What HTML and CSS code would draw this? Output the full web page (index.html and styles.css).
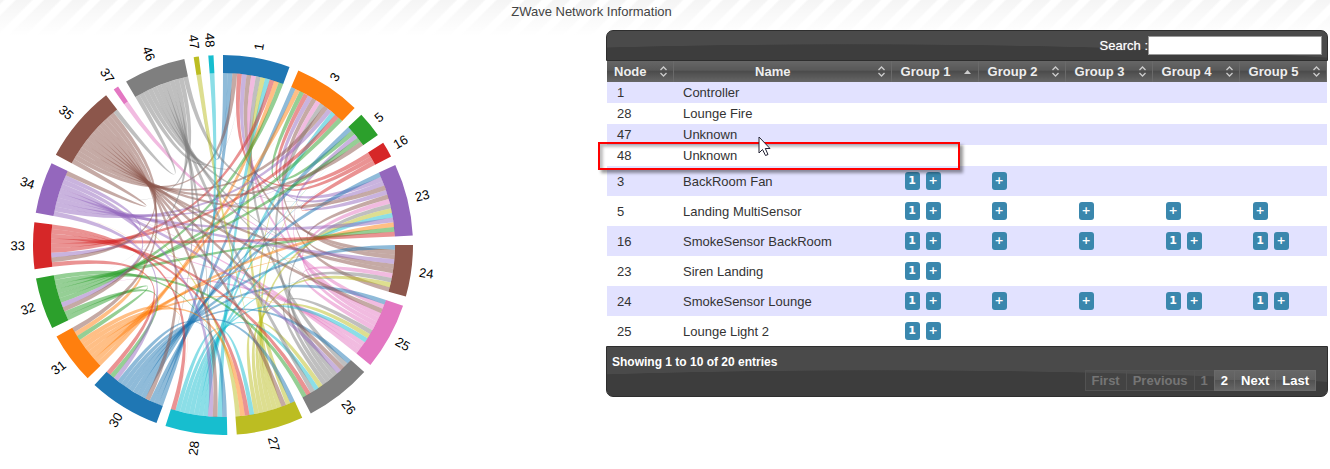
FILE: index.html
```
<!DOCTYPE html>
<html lang="en">
<head>
    <meta charset="UTF-8">
    <meta name="viewport" content="width=device-width, initial-scale=1.0">
    <title>ZWave Network Information</title>
    <link rel="stylesheet" href="styles.css">
</head>
<body>
    <header class="title-bar">ZWave Network Information</header>

    <main class="content">
        <div class="chart">
            <svg class="chord" viewBox="-223 -223 446 446" role="img" aria-label="Node associations"></svg>
        </div>

        <section class="nodes">
            <div class="toolbar">
                <label for="search">Search :</label>
                <input type="text" id="search">
            </div>

            <table class="node-table">
                <thead>
                    <tr>
                        <th class="col-node">Node</th>
                        <th>Name</th>
                        <th class="col-group sorted">Group 1</th>
                        <th class="col-group">Group 2</th>
                        <th class="col-group">Group 3</th>
                        <th class="col-group">Group 4</th>
                        <th class="col-group">Group 5</th>
                    </tr>
                </thead>
                <tbody class="tbody"></tbody>
            </table>

            <div class="footer">
                <p class="info">Showing 1 to 10 of 20 entries</p>
                <div class="pages">
                    <button disabled>First</button>
                    <button disabled>Previous</button>
                    <button disabled>1</button>
                    <button>2</button>
                    <button>Next</button>
                    <button>Last</button>
                </div>
            </div>

            <div class="highlight"></div>
            <svg class="cursor" viewBox="0 0 13 21">
                <path d="M1 1 V17 L4.5 13.5 L7.5 19.5 L10 18.5 L7.3 12.5 H12 Z" fill="#fff" stroke="#223" stroke-width="1"/>
            </svg>
        </section>
    </main>

    <script src="script.js"></script>
</body>
</html>
```
FILE: styles.css
```
* {
    box-sizing: border-box;
    padding: 0;
    margin: 0;
}

body {
    font-family: "Liberation Sans", Arial, Helvetica, sans-serif;
    font-size: 13px;
    color: #333;
    background-color: white;
    background-image:
        linear-gradient(rgba(255, 255, 255, 0), white),
        repeating-linear-gradient(135deg, #f5f5f5 0, #f5f5f5 2px, white 4px, white 10px, #f5f5f5 12px, #f5f5f5 20px);
    background-size: 100% 36px;
    background-repeat: no-repeat;
}

.title-bar {
    height: 22px;
    line-height: 24px;
    padding-right: 147px;
    text-align: center;
    color: #444;
}

.content {
    display: flex;
    align-items: flex-start;
}

/* chord diagram */
.chart {
    flex: 0 0 606px;
}

.chord {
    display: block;
    width: 446px;
    height: 446px;
    overflow: visible;
}

.chord text {
    font-size: 13px;
    fill: black;
}

.ribbon {
    fill-opacity: 0.5;
}

/* node table */
.nodes {
    position: relative;
    flex: 1;
    margin: 8px 2px 0 0;
}

.toolbar, .footer {
    display: flex;
    border: 1px solid #2e2e2e;
    color: white;
}

.toolbar {
    justify-content: flex-end;
    align-items: center;
    height: 31px;
    padding-right: 5px;
    border-radius: 7px 7px 0 0;
    background: radial-gradient(ellipse 760px 60px at 34% 73px, #3d3d3d 99%, #4a4a4a 100%);
    text-shadow: 0 0 1px rgba(255, 255, 255, 0.6);
}

.toolbar input {
    width: 174px;
    height: 19px;
    border: 1px solid #999;
    background-color: white;
    outline: none;
}

.node-table {
    width: calc(100% - 2px);
    margin: 0 1px;
    table-layout: fixed;
    border-collapse: collapse;
}

th {
    height: 21px;
    padding-right: 19px;
    color: #eee;
    background: url("data:image/svg+xml,%3Csvg xmlns='http://www.w3.org/2000/svg' width='9' height='11'%3E%3Cpath d='M1.5 4 L4.5 1 L7.5 4 M1.5 7 L4.5 10 L7.5 7' fill='none' stroke='%23ccc' stroke-width='1.3'/%3E%3C/svg%3E") no-repeat right 5px center,
        linear-gradient(#666 0, #585858 45%, #4a4a4a 46%, #666 100%);
    border-right: 1px solid #6a6a6a;
}

th.sorted {
    background: url("data:image/svg+xml,%3Csvg xmlns='http://www.w3.org/2000/svg' width='9' height='11'%3E%3Cpath d='M1 8 L4.5 4 L8 8 Z' fill='%23ccc'/%3E%3C/svg%3E") no-repeat right 6px center,
        linear-gradient(#666 0, #585858 45%, #4a4a4a 46%, #666 100%);
}

.col-node {
    width: 66px;
}

.col-group {
    width: 87px;
}

td {
    height: 21px;
    padding-left: 10px;
}

.tall td {
    height: 30px;
}

.tbody tr:nth-child(odd) {
    background-color: #e2e2ff;
}

.badge {
    display: inline-block;
    vertical-align: middle;
    width: 15px;
    height: 18px;
    margin: 0 3px;
    border: none;
    border-radius: 3px;
    background-color: #3a87ad;
    color: white;
    font-family: "DejaVu Sans", Verdana, sans-serif;
    font-size: 11px;
    font-weight: bold;
    line-height: 18px;
    text-align: center;
}

.footer {
    justify-content: space-between;
    align-items: flex-end;
    height: 51px;
    padding: 0 11px 5px 5px;
    border-radius: 0 0 7px 7px;
    background: radial-gradient(ellipse 760px 60px at 38% 83px, #3d3d3d 99%, #4a4a4a 100%);
}

.info {
    align-self: flex-start;
    padding-top: 8px;
    font-weight: bold;
    font-size: 12px;
}

.pages {
    display: flex;
}

.pages button {
    height: 21px;
    margin-left: -1px;
    padding: 0 6px;
    border: 1px solid #6a6a6a;
    background: linear-gradient(#666 0, #606060 45%, #505050 46%, #666 100%);
    color: white;
    font-family: inherit;
    font-size: 13px;
    font-weight: bold;
}

.pages button:disabled {
    border-color: #525252;
    background: rgba(255, 255, 255, 0.03);
    color: #757575;
}

button {
    cursor: pointer;
}

/* marker over row 48 */
.highlight {
    position: absolute;
    top: 112px;
    left: -8px;
    width: 362px;
    height: 28px;
    border: 2px solid red;
    box-shadow: 3px 3px 3px rgba(0, 0, 0, 0.4), inset 3px 3px 3px rgba(0, 0, 0, 0.25);
}

.cursor {
    position: absolute;
    top: 106px;
    left: 152px;
    width: 13px;
    height: 21px;
}
```
FILE: script.js
```
// table rows: node, name, then the number of associations in each group
const rows = [
    [1, 'Controller'],
    [28, 'Lounge Fire'],
    [47, 'Unknown'],
    [48, 'Unknown'],
    [3, 'BackRoom Fan', 1, 0],
    [5, 'Landing MultiSensor', 1, 0, 0, 0, 0],
    [16, 'SmokeSensor BackRoom', 1, 0, 0, 1, 1],
    [23, 'Siren Landing', 1],
    [24, 'SmokeSensor Lounge', 1, 0, 0, 1, 1],
    [25, 'Lounge Light 2', 1]
];

const tbody = document.querySelector('.tbody');

function addBadge(cell, text) {
    const badge = document.createElement('button');
    badge.className = 'badge';
    badge.innerText = text;
    cell.appendChild(badge);
}

rows.forEach(function(row) {
    const tr = document.createElement('tr');
    if (row.length > 2) {
        tr.className = 'tall';
    }
    for (let i = 0; i < 7; i++) {
        const td = document.createElement('td');
        if (i < 2) {
            td.innerText = row[i];
        } else if (row[i] !== undefined) {
            if (row[i] > 0) {
                addBadge(td, row[i]);
            }
            addBadge(td, '+');
        }
        tr.appendChild(td);
    }
    tbody.appendChild(tr);
});

// neighbours of each node, in the order they leave the arc
const links = [
    [1, [47, 30, 35, 16, 23, 24, 25, 26, 27, 28, 33, 31, 32]],
    [3, [30, 31, 5, 16, 23, 24, 25, 26, 35, 34, 28, 33, 32]],
    [5, [30, 3, 23, 32, 35]],
    [16, [1, 3, 23]],
    [23, [30, 1, 3, 35, 5, 24, 25, 26, 27, 28, 34, 31, 32, 33]],
    [24, [30, 1, 3, 34, 23, 35, 25, 26, 27, 5]],
    [25, [30, 1, 35, 3, 5, 23, 24, 26, 27, 28, 32, 33, 34]],
    [26, [30, 1, 35, 34, 3, 23, 24, 25, 27, 28, 46, 33, 32]],
    [27, [30, 1, 35, 3, 5, 23, 24, 25, 26, 28, 33, 31, 34]],
    [28, [30, 1, 35, 34, 3, 5, 23, 24, 25, 26, 27, 33]],
    [30, [1, 3, 5, 35, 16, 23, 24, 25, 26, 27, 28, 34, 32, 33]],
    [31, [1, 3, 23, 24, 25, 27, 28, 32, 34, 35]],
    [32, [31, 30, 35, 34, 1, 3, 5, 23, 26, 28]],
    [33, [30, 35, 34, 1, 3, 23, 26, 27, 28]],
    [34, [30, 3, 5, 23, 24, 26, 28, 32, 33, 35]],
    [35, [34, 1, 3, 5, 23, 24, 25, 26, 27, 28, 30, 31, 32, 33, 46]],
    [37, [24]],
    [46, [35, 1, 3, 23, 24, 25, 26, 28, 30, 32, 34, 16]],
    [47, [27]],
    [48, [28]]
];
const colors = ['#1f77b4', '#ff7f0e', '#2ca02c', '#d62728', '#9467bd', '#8c564b', '#e377c2', '#7f7f7f', '#bcbd22', '#17becf'];

const svg = document.querySelector('.chord');
const outer = 190;
const inner = 172;
const padding = 0.05;
const total = links.reduce((sum, link) => sum + link[1].length, 0);
const unit = (2 * Math.PI - padding * links.length) / total;

function point(angle, r) {
    return (r * Math.sin(angle)) + ',' + (-r * Math.cos(angle));
}

function draw(d, fill, className) {
    const path = document.createElementNS('http://www.w3.org/2000/svg', 'path');
    path.setAttribute('d', d);
    path.setAttribute('fill', fill);
    path.setAttribute('class', className);
    svg.appendChild(path);
}

let angle = 0;
const nodes = links.map(function(link, i) {
    // the palette has 10 colours and repeats
    const node = {id: link[0], out: link[1], start: angle, color: colors[i % 10], index: i};
    angle += unit * link[1].length;
    node.end = angle;
    angle += padding;
    return node;
});

nodes.forEach(function(node) {
    const start = node.start;
    const end = node.end;
    draw('M' + point(start, outer) + 'A190,190 0 0,1 ' + point(end, outer) +
        'L' + point(end, inner) + 'A172,172 0 0,0 ' + point(start, inner) + 'Z', node.color, 'arc');

    const degrees = (start + end) / 2 * 180 / Math.PI;
    const flip = degrees > 180;
    const label = document.createElementNS('http://www.w3.org/2000/svg', 'text');
    label.setAttribute('transform', 'rotate(' + (degrees - 90) + ') translate(198)' + (flip ? ' rotate(180)' : ''));
    label.setAttribute('text-anchor', flip ? 'end' : 'start');
    label.setAttribute('dy', '.35em');
    label.textContent = node.id;
    svg.appendChild(label);
});

nodes.forEach(function(node) {
    node.out.forEach(function(id, slot) {
        const target = nodes.find(n => n.id === id);
        const back = target.out.indexOf(node.id);
        // a two-way link is drawn once, from the later node
        if (back >= 0 && target.index > node.index) {
            return;
        }
        const s0 = node.start + unit * slot;
        const s1 = s0 + unit;
        let t0 = target.start + unit * back;
        let t1 = t0 + unit;
        if (back < 0) {
            // one-way links narrow down to a point
            t0 = target.start + unit * (node.index % target.out.length);
            t1 = t0;
        }
        draw('M' + point(s0, inner) + 'A172,172 0 0,1 ' + point(s1, inner) +
            'Q0,0 ' + point(t0, inner) + 'A172,172 0 0,1 ' + point(t1, inner) +
            'Q0,0 ' + point(s0, inner) + 'Z', node.color, 'ribbon');
    });
});
```
